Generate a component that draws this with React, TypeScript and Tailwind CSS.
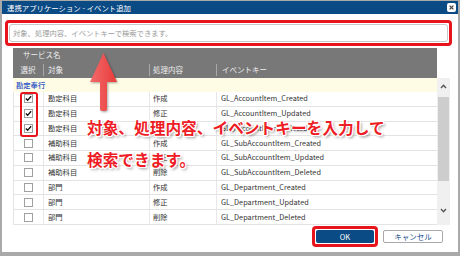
import React from 'react'

interface EventRow {
  checked: boolean
  target: string
  action: string
  eventKey: string
}

const rows: EventRow[] = [
  { checked: true, target: '勘定科目', action: '作成', eventKey: 'GL_AccountItem_Created' },
  { checked: true, target: '勘定科目', action: '修正', eventKey: 'GL_AccountItem_Updated' },
  { checked: true, target: '勘定科目', action: '削除', eventKey: 'GL_AccountItem_Deleted' },
  { checked: false, target: '補助科目', action: '作成', eventKey: 'GL_SubAccountItem_Created' },
  { checked: false, target: '補助科目', action: '修正', eventKey: 'GL_SubAccountItem_Updated' },
  { checked: false, target: '補助科目', action: '削除', eventKey: 'GL_SubAccountItem_Deleted' },
  { checked: false, target: '部門', action: '作成', eventKey: 'GL_Department_Created' },
  { checked: false, target: '部門', action: '修正', eventKey: 'GL_Department_Updated' },
  { checked: false, target: '部門', action: '削除', eventKey: 'GL_Department_Deleted' },
]

const Checkbox: React.FC<{ checked: boolean }> = ({ checked }) => (
  <div className="w-[9px] h-[9px] border border-[#a0a0a0] bg-white flex items-center justify-center">
    {checked && (
      <svg width="8" height="7" viewBox="0 0 8 7">
        <path d="M1 3.6 L3 5.6 L7 1" fill="none" stroke="#111" strokeWidth="1.6" />
      </svg>
    )}
  </div>
)

const Chevron: React.FC<{ up?: boolean }> = ({ up }) => (
  <svg width="7" height="5" viewBox="0 0 7 5">
    <path d={up ? 'M1 4 L3.5 1.3 L6 4' : 'M1 1 L3.5 3.7 L6 1'} fill="none" stroke="#555" strokeWidth="1.4" />
  </svg>
)

const App: React.FC = () => {
  return (
    <div className="w-[460px] h-[256px] bg-[#a9a9a9] pt-px px-[2px] pb-[4px] flex flex-col font-['Noto_Sans_CJK_JP','Noto_Sans',sans-serif]">
      {/* Title bar */}
      <div className="h-[13px] bg-[#0a4a85] flex items-center justify-between pl-[5px] pr-[2px]">
        <span className="text-white text-[7.4px] leading-none">連携アプリケーション - イベント追加</span>
        <div className="w-[9px] h-[9px] bg-white rounded-[2px] flex items-center justify-center">
          <svg width="5" height="5" viewBox="0 0 5 5">
            <path d="M0.6 0.6 L4.4 4.4 M4.4 0.6 L0.6 4.4" stroke="#444" strokeWidth="1.3" />
          </svg>
        </div>
      </div>

      {/* Body */}
      <div className="flex-1 bg-white relative flex flex-col pt-[6px]">
        {/* Search */}
        <div className="ml-[3px] mr-[6px] h-[26px] border-[3px] border-[#e8141c] rounded-[4px] p-px">
          <div className="h-full border border-[#c9c9c9] rounded-[3px] flex items-center pl-[3px] text-[7.3px] text-[#9a9a9a]">
            対象、処理内容、イベントキーで検索できます。
          </div>
        </div>

        {/* Table */}
        <div className="ml-[11px] w-[437px] mt-[2px] flex flex-col">
          <div className="w-[424px] bg-[#787878] text-[#eeeeee] text-[7.5px]">
            <div className="h-[14px] flex items-center pl-[10px]">サービス名</div>
            <div className="h-[16px] flex items-center">
              <div className="w-[31px] h-[12px] flex items-center justify-center border-r border-[#a8a8a8]">選択</div>
              <div className="w-[106px] h-[12px] flex items-center pl-[4px] border-r border-[#a8a8a8]">対象</div>
              <div className="w-[67px] h-[12px] flex items-center pl-[3px] border-r border-[#a8a8a8]">処理内容</div>
              <div className="flex-1 h-[12px] flex items-center pl-[5px]">イベントキー</div>
            </div>
          </div>

          <div className="flex">
            <div className="w-[424px] flex flex-col">
              <div className="h-[14px] bg-[#fffce6] flex items-center pl-[3px] text-[7.3px] text-[#1f4fc4] font-medium">
                勘定奉行
              </div>
              {rows.map((r) => (
                <div key={r.eventKey} className="h-[14.78px] flex border-b border-l border-[#e3e3e3] text-[7.3px] text-[#333]">
                  <div className="w-[30px] flex items-center justify-center border-r border-[#e8e8e8]">
                    <Checkbox checked={r.checked} />
                  </div>
                  <div className="w-[106px] flex items-center pl-[4px] border-r border-[#e8e8e8]">{r.target}</div>
                  <div className="w-[67px] flex items-center pl-[3px] border-r border-[#e8e8e8]">{r.action}</div>
                  <div className="flex-1 flex items-center pl-[4px]">{r.eventKey}</div>
                </div>
              ))}
            </div>

            {/* Scrollbar */}
            <div className="w-[13px] bg-[#f0f0f0] flex flex-col items-center">
              <div className="h-[19px] flex items-center justify-center pb-[2px]">
                <Chevron up />
              </div>
              <div className="w-[11px] h-[84px] bg-[#cdcdcd]" />
              <div className="flex-1" />
              <div className="h-[24px] flex items-center justify-center pb-[4px]">
                <Chevron />
              </div>
            </div>
          </div>
        </div>

        {/* Buttons */}
        <div className="mt-px flex justify-end items-center pr-[15px] gap-[5px]">
          <div className="h-[21px] w-[66px] border-[3px] border-[#e8141c] rounded-[4px] p-px">
            <div className="h-full bg-[#0a4a85] rounded-[2px] flex items-center justify-center text-white text-[7.5px]">
              OK
            </div>
          </div>
          <div className="h-[13px] w-[60px] border border-[#a9a9a9] rounded-[2px] bg-white flex items-center justify-center text-[7.5px] text-[#1c4f8c]">
            キャンセル
          </div>
        </div>

        {/* Annotations */}
        <div className="absolute left-[18px] top-[78px] w-[18px] h-[45px] border-[2.5px] border-[#e8141c] rounded-[3px]" />

        <svg className="absolute left-[84px] top-[38px] drop-shadow-[1px_1px_1px_rgba(0,0,0,0.35)]" width="34" height="62" viewBox="0 0 34 62">
          <defs>
            <linearGradient id="arrowFill" x1="0" y1="0" x2="1" y2="0">
              <stop offset="0" stopColor="#f36a6a" />
              <stop offset="1" stopColor="#e93b3b" />
            </linearGradient>
          </defs>
          <path d="M17.5 1 L31 30 L21 30 L21 57 Q21 59 19 59 L16 59 Q14 59 14 57 L14 30 L4 30 Z" fill="url(#arrowFill)" />
        </svg>

        <div className="absolute left-[85px] top-[98px] text-[15.7px] leading-[31.5px] font-bold text-[#ee1c25] whitespace-nowrap [text-shadow:1px_0_0_#fff,-1px_0_0_#fff,0_1px_0_#fff,0_-1px_0_#fff,1px_1px_0_#fff,-1px_-1px_0_#fff,1px_-1px_0_#fff,-1px_1px_0_#fff,2px_2px_3px_rgba(0,0,0,0.45)]">
          <div>対象、処理内容、イベントキーを入力して</div>
          <div>検索できます。</div>
        </div>
      </div>
    </div>
  )
}

export default App
